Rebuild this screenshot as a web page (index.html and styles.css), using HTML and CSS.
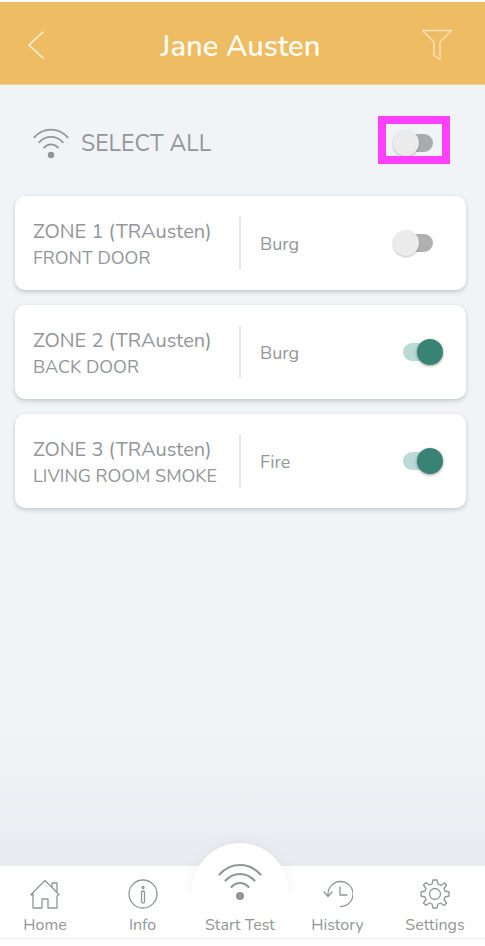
FILE: index.html
```html
<!DOCTYPE html>
<html lang="en">
<head>
<meta charset="utf-8">
<meta name="viewport" content="width=device-width, initial-scale=1">
<title>Jane Austen</title>
<link rel="stylesheet" href="styles.css">
</head>
<body>
<svg class="sprite" aria-hidden="true">
  <symbol id="wifi" viewBox="0 0 44 38">
    <path d="M1.5 11.5Q10 2 22 2T42.5 11.5M7.500 17.500Q13.500 11 22 11T36.500 17.500M13.500 24Q17 20 22 20T30.500 24"/>
    <circle class="dot" cx="22" cy="33" r="4"/>
  </symbol>
</svg>
<div class="app">
  <header class="bar">
    <button class="icon-button" aria-label="Back">
      <svg class="back" viewBox="0 0 16 28"><path d="M15 1 1 14 15 27"/></svg>
    </button>
    <h1>Jane Austen</h1>
    <button class="icon-button" aria-label="Filter">
      <svg class="filter" viewBox="0 0 32 32"><path d="M1.500 1.500H30.500L19 13V30.500L13 26.500V13Z"/></svg>
    </button>
  </header>
  <main>
    <div class="select-all">
      <svg class="wifi" aria-hidden="true"><use href="#wifi"/></svg>
      <label for="all">SELECT ALL</label>
      <span class="highlight"><input class="switch cool" type="checkbox" id="all"></span>
    </div>
    <ul class="zones">
      <li class="zone">
        <label class="name" for="z1">ZONE 1 (TRAusten)<small>FRONT DOOR</small></label>
        <span class="kind">Burg</span>
        <input class="switch" type="checkbox" id="z1">
      </li>
      <li class="zone">
        <label class="name" for="z2">ZONE 2 (TRAusten)<small>BACK DOOR</small></label>
        <span class="kind">Burg</span>
        <input class="switch" type="checkbox" id="z2" checked>
      </li>
      <li class="zone">
        <label class="name" for="z3">ZONE 3 (TRAusten)<small>LIVING ROOM SMOKE</small></label>
        <span class="kind">Fire</span>
        <input class="switch" type="checkbox" id="z3" checked>
      </li>
    </ul>
  </main>
  <nav class="tabs">
    <a href="#home">
      <svg viewBox="0 0 30 30"><path d="M3 17 1 15.500 15 1.500 29 15.500 27 17V29H18V20H12V29H3V14M22 8V4H27V13"/></svg>
      Home
    </a>
    <a href="#info">
      <svg viewBox="0 0 30 30"><circle cx="15" cy="15" r="14"/><circle cx="15" cy="8.500" r="1"/><rect x="13.500" y="12" width="3" height="12" rx="1.500"/></svg>
      Info
    </a>
    <a class="start" href="#test">
      <svg class="wifi"><use href="#wifi"/></svg>
      Start Test
    </a>
    <a href="#history">
      <svg viewBox="0 0 30 30"><path d="M5 17V15A12.500 12.500 0 1 1 17.500 27.500M1 13 5 17.500 9 13M17 8V16H24"/></svg>
      History
    </a>
    <a href="#settings">
      <svg viewBox="0 0 30 30"><circle cx="15" cy="15" r="5.500"/><path d="M13 1H17L18 5 21 6.300 24.500 4 26.500 6 24 9.500 25 12 29 13V17L25 18 24 20.500 26.500 24 24 26.500 20.500 24 18 25 17 29H13L12 25 9.500 24 6 26.500 3.500 24 6 20.500 5 18 1 17V13L5 12 6 9.500 3.500 6 6 3.500 9.500 6 12 5Z"/></svg>
      Settings
    </a>
  </nav>
</div>
</body>
</html>
```
FILE: styles.css
```css
* { box-sizing: border-box; }

body {
  margin: 0;
  background: #fff;
  color: #929699;
  font-family: Nunito, Lato, sans-serif;
}

svg {
  display: block;
  fill: none;
  stroke: currentColor;
  stroke-linecap: round;
  stroke-linejoin: round;
}

.sprite { position: absolute; width: 0; height: 0; }
.dot { fill: currentColor; stroke: none; }

.app {
  display: flex;
  flex-direction: column;
  min-height: 100vh;
  padding: 2px 0 7px;
}

.bar {
  display: grid;
  grid-template-columns: 32px 1fr 32px;
  align-items: center;
  height: 83px;
  padding: 3px 32px 0 28px;
  background: #eebc63;
  color: #fff;
  border-bottom: 1px solid #f2cf90;
}

.bar h1 {
  margin: 0;
  padding-top: 5px;
  font-size: 29px;
  line-height: 36px;
  font-weight: 600;
  text-align: center;
  color: #fffaf0;
}

.icon-button {
  padding: 0;
  border: 0;
  background: none;
  color: #fae3b9;
}

.back { width: 16px; height: 28px; stroke-width: 1.6; color: #fdf0d8; }
.filter { width: 32px; height: 32px; stroke-width: 1.4; }

main {
  flex: 1;
  padding: 0 19px 0 15px;
  background: linear-gradient(#f0f4f7 0, #f0f4f7 640px, #e8ebef 100%);
}

.select-all {
  display: flex;
  align-items: center;
  gap: 12px;
  height: 111px;
  padding: 5px 33px 0 18px;
  font-size: 23px;
  line-height: 30px;
}

.select-all .wifi { width: 36px; height: 31px; stroke-width: 2.2; }
.select-all label { flex: 1; padding-top: 2px; }

.highlight { position: relative; display: flex; }
.highlight::after {
  content: "";
  position: absolute;
  inset: -18px -17px -12px -25px;
  border: 8px solid #ff40ff;
  pointer-events: none;
}

.switch {
  appearance: none;
  position: relative;
  width: 30px;
  height: 18px;
  margin: 0;
  border-radius: 9px;
  background: #b0b0b0;
}

.switch::before {
  content: "";
  position: absolute;
  top: -4px;
  left: -10px;
  width: 26px;
  height: 26px;
  border-radius: 50%;
  background: #ebebeb;
  box-shadow: 0 1px 2px rgba(0, 0, 0, 0.25);
}

.switch.cool { background: #a8abb0; }
.switch:checked { background: #b9dad6; }
.switch:checked::before { left: 14px; background: #398276; box-shadow: 0 1px 3px rgba(0, 0, 0, 0.4); }

.zones {
  display: grid;
  gap: 15px;
  margin: 0;
  padding: 0;
  list-style: none;
}

.zone {
  display: grid;
  grid-template-columns: 206px 1fr auto;
  align-items: center;
  height: 94px;
  padding: 0 33px 0 18px;
  border-radius: 10px;
  background: #fff;
  box-shadow: 0 2px 4px rgba(60, 70, 80, 0.25);
}

.name {
  padding-top: 4px;
  font-size: 20px;
  line-height: 26px;
  white-space: nowrap;
}

.name small { display: block; font-size: 18px; }

.kind {
  padding: 2px 0 0 19px;
  border-left: 2px solid #e3e5e7;
  font-size: 18px;
  line-height: 50px;
}

.tabs {
  display: grid;
  grid-template: 72px / repeat(5, 72px);
  justify-content: space-between;
  padding: 0 14px 0 9px;
  background: #fff;
  border-bottom: 1px solid #f3f3f3;
}

.tabs a {
  position: relative;
  display: flex;
  flex-direction: column;
  align-items: center;
  justify-content: flex-end;
  gap: 5px;
  padding-bottom: 2px;
  color: #929699;
  font-size: 16px;
  line-height: 22px;
  text-decoration: none;
  white-space: nowrap;
}

.tabs svg { width: 30px; height: 30px; stroke-width: 1.3; }

.tabs .start {
  z-index: 1;
  gap: 13px;
}

.tabs .start::before {
  content: "";
  position: absolute;
  z-index: -1;
  bottom: 42px;
  width: 96px;
  height: 53px;
  border-radius: 48px 48px 0 0;
  background: #fff;
  box-shadow: 0 0 16px rgba(0, 0, 0, 0.06);
  clip-path: inset(-30px -30px 0);
}

.tabs .start .wifi { flex: none; width: 44px; height: 38px; stroke-width: 2.2; }
```
